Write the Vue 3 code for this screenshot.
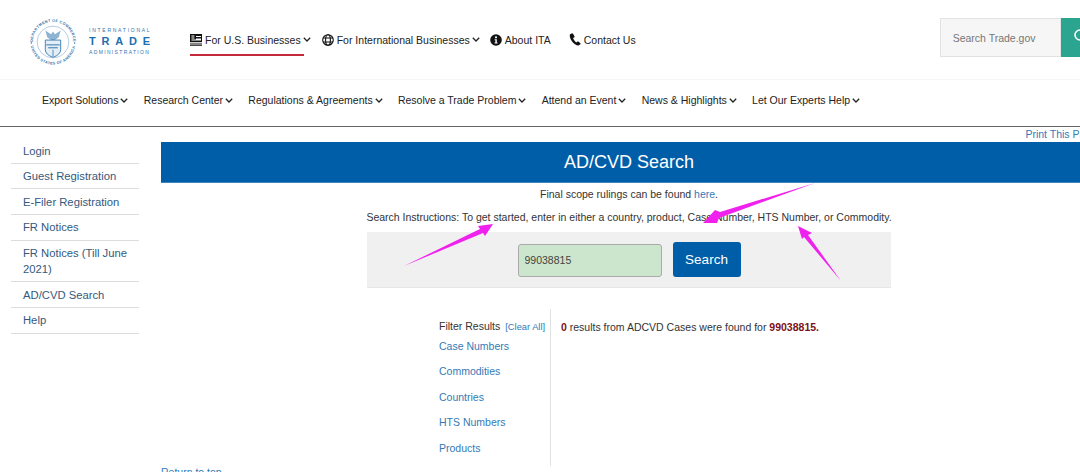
<template>
  <div class="page">
    <header class="top-bar">
      <a class="logo">
        <svg class="seal" width="50" height="50" viewBox="0 0 52 52">
          <defs>
            <path id="arc-top" d="M5 26a21 21 0 0 1 42 0" />
            <path id="arc-bottom" d="M2.5 26a23.500 23.500 0 0 0 47 0" />
          </defs>
          <circle cx="26" cy="26" r="16.500" fill="none" stroke="#7fa8cb" stroke-width="0.6" />
          <text class="seal-text"><textPath href="#arc-top" startOffset="50%" text-anchor="middle">DEPARTMENT OF COMMERCE</textPath></text>
          <text class="seal-text"><textPath href="#arc-bottom" startOffset="50%" text-anchor="middle">UNITED STATES OF AMERICA</textPath></text>
          <circle cx="3.500" cy="27" r="0.8" fill="#2f74ad" />
          <circle cx="48.500" cy="27" r="0.8" fill="#2f74ad" />
          <path d="M18 14l6 4 2-3 2 3 6-4-2 7-4 3h-4l-4-3z" fill="#8fb3d2" />
          <path d="M18 24h16v10q0 5-8 8-8-3-8-8z" fill="#e4eef6" stroke="#2f74ad" stroke-width="0.9" />
          <path d="M19 29h14M21 32h10" stroke="#2f74ad" stroke-width="1" />
          <path d="M26 34v7" stroke="#2f74ad" stroke-width="0.8" />
        </svg>
        <div class="wordmark">
          <span class="wm-intl">INTERNATIONAL</span>
          <span class="wm-big">TRADE</span>
          <span class="wm-admin">ADMINISTRATION</span>
        </div>
      </a>
      <nav class="top-links">
        <a class="top-link active">
          <svg width="12" height="12" viewBox="0 0 12 12">
            <path d="M0 0h12v8.200H0z" fill="#111" />
            <path d="M0 9.600h12v1H0zM0 11.200h12v.8H0z" fill="#111" />
            <path d="M6 2h5v1H6zM6 4.400h5v1H6zM1.400 1.400h3v1h-3zM1.400 3.400h3v1h-3zM1.400 5.600h9.600v1H1.400z" fill="#fff" />
          </svg>
          <span>For U.S. Businesses</span>
          <svg class="chev" width="8" height="5" viewBox="0 0 8 5"><path d="M.8.8L4 4 7.200.8" /></svg>
        </a>
        <a class="top-link">
          <svg width="12" height="12" viewBox="0 0 12 12" fill="none" stroke="#111" stroke-width="1.100">
            <circle cx="6" cy="6" r="5.300" />
            <ellipse cx="6" cy="6" rx="2.400" ry="5.300" />
            <path d="M1 4h10M1 8h10" />
          </svg>
          <span>For International Businesses</span>
          <svg class="chev" width="8" height="5" viewBox="0 0 8 5"><path d="M.8.8L4 4 7.200.8" /></svg>
        </a>
        <a class="top-link">
          <svg width="12" height="12" viewBox="0 0 12 12">
            <circle cx="6" cy="6" r="5.800" fill="#111" />
            <circle cx="6" cy="3.300" r="1.100" fill="#fff" />
            <path d="M4.700 5.200h2.100v3.200h.7v1H4.600v-1h.8V6.200h-.7z" fill="#fff" />
          </svg>
          <span>About ITA</span>
        </a>
        <a class="top-link contact">
          <svg width="12" height="13" viewBox="0 0 12 13">
            <path d="M2.600.4L.8 1.400C.2 5.800 4.600 11.800 9.600 12.600l1.800-1.300c.3-.3.3-.7 0-1L9.300 8.600c-.3-.2-.6-.2-.9 0l-1 .9C6 8.700 4.500 6.500 4.100 5l1.200-.7c.3-.2.4-.5.3-.8L4 .8C3.700.3 3.100.1 2.600.4z" fill="#111" />
          </svg>
          <span>Contact Us</span>
        </a>
      </nav>
      <div class="site-search">
        <input class="site-input" placeholder="Search Trade.gov" />
        <button class="site-btn">
          <svg width="16" height="16" viewBox="0 0 16 16" fill="none" stroke="#fff" stroke-width="1.600">
            <circle cx="7" cy="7" r="5" />
            <path d="M11 11l4 4" />
          </svg>
        </button>
      </div>
    </header>

    <nav class="main-nav">
      <a v-for="item in navItems" :key="item" class="nav-item">
        <span>{{ item }}</span>
        <svg class="chev" width="8" height="5" viewBox="0 0 8 5"><path d="M.8.8L4 4 7.200.8" /></svg>
      </a>
    </nav>

    <div class="content">
      <aside class="sidebar">
        <a v-for="item in sideItems" :key="item" class="side-item">{{ item }}</a>
      </aside>

      <main class="main">
        <div class="print-row"><a class="link">Print This Page</a></div>
        <h1 class="banner">AD/CVD Search</h1>
        <p class="scope">Final scope rulings can be found <a class="link">here</a>.</p>
        <p class="instructions">Search Instructions: To get started, enter in either a country, product, Case Number, HTS Number, or Commodity.</p>
        <div class="search-band">
          <input class="search-input" value="99038815" />
          <button class="search-btn">Search</button>
        </div>
        <div class="results">
          <div class="filters">
            <div class="filter-head">
              <span>Filter Results</span>
              <a class="link clear">[Clear All]</a>
            </div>
            <a v-for="f in filters" :key="f" class="link filter-link">{{ f }}</a>
          </div>
          <p class="summary"><b>0</b> results from ADCVD Cases were found for <b>99038815.</b></p>
        </div>
        <a class="link return-top">Return to top</a>
      </main>
    </div>

    <!-- annotation arrows drawn over the screenshot -->
    <svg class="arrows" width="1080" height="472" viewBox="0 0 1080 472">
      <polygon points="404,266 480,229 478,226 493,224 485,236 483,233" />
      <polygon points="815,183 720,212 715,210 703,223 717,223 719,218" />
      <polygon points="841,281 808,235 812,233 798,226 802,239 804,237" />
    </svg>
  </div>
</template>

<script setup>
const navItems = [
  'Export Solutions',
  'Research Center',
  'Regulations & Agreements',
  'Resolve a Trade Problem',
  'Attend an Event',
  'News & Highlights',
  'Let Our Experts Help'
]

const sideItems = [
  'Login',
  'Guest Registration',
  'E-Filer Registration',
  'FR Notices',
  'FR Notices (Till June 2021)',
  'AD/CVD Search',
  'Help'
]

const filters = ['Case Numbers', 'Commodities', 'Countries', 'HTS Numbers', 'Products']
</script>

<style scoped>
.page {
  position: relative;
  width: 1120px;
  height: 472px;
  overflow: hidden;
  background: #fff;
  color: #333;
  font-family: "Liberation Sans", Arial, sans-serif;
  font-size: 10.5px;
}

a {
  text-decoration: none;
}

.link {
  color: #337ab7;
}

.top-bar {
  display: flex;
  align-items: center;
  height: 79px;
  padding-left: 28px;
  border-bottom: 1px solid #f6f6f6;
}

.logo {
  display: flex;
  align-items: center;
  width: 162px;
  margin-top: 4px;
}

.seal-text {
  font-size: 3.9px;
  font-weight: bold;
  letter-spacing: 0.35px;
  fill: #2f74ad;
}

.wordmark {
  display: flex;
  flex-direction: column;
  margin-left: 11px;
  color: #2f74ad;
  line-height: 1;
  white-space: nowrap;
}

.wm-intl {
  font-size: 5px;
  letter-spacing: 1.75px;
}

.wm-admin {
  font-size: 5px;
  letter-spacing: 1.35px;
}

.wm-big {
  margin: 3px 0;
  font-size: 11px;
  font-weight: bold;
  letter-spacing: 5.8px;
  color: #1d6fb0;
}

.top-links {
  display: flex;
  align-items: center;
  height: 32px;
  color: #222;
}

.top-link {
  position: relative;
  display: flex;
  align-items: center;
  gap: 3px;
  height: 30px;
  margin-right: 10px;
  white-space: nowrap;
  color: #222;
}

.top-link .chev {
  margin-left: -1px;
}

.top-link.active {
  margin-right: 11px;
}

.top-link.active::after {
  content: "";
  position: absolute;
  left: 0;
  bottom: -1px;
  width: 114px;
  height: 2px;
  background: #c42a39;
}

.top-link.contact {
  margin-left: 8px;
}

.chev {
  fill: none;
  stroke: #222;
  stroke-width: 1.3;
}

.site-search {
  display: flex;
  height: 39px;
  margin-left: 294px;
  margin-bottom: 4px;
}

.site-input {
  box-sizing: border-box;
  width: 121px;
  height: 39px;
  padding: 0 12px;
  border: 1px solid #e2e2e2;
  background: #f6f6f6;
  font-family: inherit;
  font-size: 10.5px;
  outline: none;
}

.site-input::placeholder {
  color: #777;
}

.site-btn {
  width: 40px;
  height: 39px;
  padding: 0;
  border: none;
  background: #2ba58f;
}

.main-nav {
  display: flex;
  align-items: center;
  gap: 15.25px;
  box-sizing: border-box;
  height: 47px;
  padding: 0 0 6px 42px;
  border-bottom: 1px solid #666;
}

.nav-item {
  display: flex;
  align-items: center;
  gap: 2px;
  white-space: nowrap;
  color: #222;
}

.content {
  display: flex;
  padding-left: 11px;
}

.sidebar {
  display: flex;
  flex-direction: column;
  width: 128px;
  margin-top: 11px;
  margin-right: 22px;
}

.side-item {
  padding: 4.5px 12px 4.17px;
  border-bottom: 1px solid #ddd;
  color: #35597d;
  font-size: 11.25px;
  line-height: 16px;
}

.main {
  flex: none;
  width: 936px;
}

.print-row {
  height: 15px;
  line-height: 15px;
  text-align: right;
}

.banner {
  height: 40px;
  margin: 0;
  border-bottom: 1px solid #3f83bd;
  background: #005ea8;
  color: #fff;
  font-size: 18px;
  font-weight: normal;
  line-height: 40px;
  text-align: center;
}

.scope {
  margin: 4px 0 0;
  line-height: 14px;
  text-align: center;
}

.instructions {
  margin: 8.5px 0 0;
  line-height: 14px;
  text-align: center;
}

.search-band {
  display: flex;
  align-items: center;
  justify-content: center;
  gap: 11px;
  box-sizing: border-box;
  width: 524px;
  height: 55.5px;
  margin: 8.5px auto 0;
  border-bottom: 1px solid #e6e6e6;
  background: #f0f0f0;
}

.search-input {
  box-sizing: border-box;
  width: 144px;
  height: 33px;
  margin-top: 2px;
  padding: 0 6px;
  border: 1px solid #aaa;
  border-radius: 3px;
  background: #cce6cd;
  color: #444;
  font-family: inherit;
  font-size: 10.5px;
  outline: none;
}

.search-btn {
  width: 68px;
  height: 35px;
  border: none;
  border-radius: 3px;
  background: #005ea8;
  color: #fff;
  font-family: inherit;
  font-size: 13.5px;
}

.results {
  display: flex;
  height: 157px;
  margin-top: 21.5px;
  padding-left: 278px;
}

.filters {
  display: flex;
  flex-direction: column;
  box-sizing: border-box;
  width: 112px;
  padding-top: 9.5px;
  border-right: 1px solid #e2e2e2;
}

.filter-head {
  display: flex;
  align-items: baseline;
  gap: 5px;
  height: 15.5px;
  line-height: 15px;
  white-space: nowrap;
}

.clear {
  font-size: 9.3px;
}

.filter-link {
  height: 25.4px;
  line-height: 25.4px;
}

.summary {
  margin: 11px 0 0 10px;
  line-height: 14px;
  white-space: nowrap;
}

.summary b {
  color: #7c1116;
}

.return-top {
  display: block;
}

.arrows {
  position: absolute;
  top: 0;
  left: 0;
  pointer-events: none;
}

.arrows polygon {
  fill: #f020ee;
}
</style>

<style>
html,
body {
  overflow: hidden;
}
</style>
